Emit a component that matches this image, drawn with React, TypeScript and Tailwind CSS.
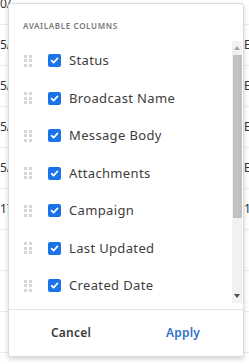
import React from "react";

const bgRows = [
  { l: "0/", r: "" },
  { l: "5/", r: "E" },
  { l: "5/", r: "E" },
  { l: "5/", r: "E" },
  { l: "5/", r: "E" },
  { l: "17", r: "1" },
  { l: "", r: "" },
  { l: "", r: "" },
  { l: "", r: "" },
];

const columns = [
  "Status",
  "Broadcast Name",
  "Message Body",
  "Attachments",
  "Campaign",
  "Last Updated",
  "Created Date",
  "Sent Date",
];

function DragHandle() {
  return (
    <div className="grid grid-cols-2 gap-x-[2px] gap-y-[1.5px] w-[8px] shrink-0">
      {Array.from({ length: 6 }).map((_, i) => (
        <div key={i} className="w-[3px] h-[3px] bg-[#d6d6d6]" />
      ))}
    </div>
  );
}

function Check() {
  return (
    <div className="w-[13px] h-[13px] rounded-[2px] bg-[#1a73e8] flex items-center justify-center shrink-0">
      <svg width="9" height="9" viewBox="0 0 10 10" fill="none">
        <path d="M1.8 5.2 L4 7.3 L8.3 2.6" stroke="#fff" strokeWidth="2" strokeLinecap="round" strokeLinejoin="round" />
      </svg>
    </div>
  );
}

export default function App() {
  return (
    <div
      className="relative w-[249px] h-[364px] bg-white overflow-hidden"
      style={{ fontFamily: '"Noto Sans", "Open Sans", sans-serif' }}
    >
      {/* background table */}
      <div className="flex flex-col mt-[-16px]">
        {bgRows.map((r, i) => (
          <div
            key={i}
            className="h-[41px] shrink-0 border-b border-[#ededed] flex items-center justify-between text-[12px] text-[#333]"
          >
            <span className="ml-0">{r.l}</span>
            <span className="w-[5px] overflow-hidden">{r.r}</span>
          </div>
        ))}
      </div>

      {/* popup */}
      <div className="absolute left-[8px] top-[3px] w-[236px] h-[354px] bg-white border border-[#dcdcdc] rounded-[3px] shadow-[0_2px_5px_rgba(0,0,0,0.18)] flex flex-col">
        <div className="h-[37px] shrink-0 pt-[16px] pl-[14px]">
          <div className="text-[8px] leading-[12px] font-semibold tracking-[0.65px] text-[#777]">
            AVAILABLE COLUMNS
          </div>
        </div>
        <div className="h-[262px] shrink-0 flex">
          <div className="flex-1 overflow-hidden pt-[1px]">
            {columns.map((c) => (
              <div key={c} className="h-[37.5px] flex items-center pl-[15px]">
                <DragHandle />
                <div className="ml-[16px]">
                  <Check />
                </div>
                <span className="ml-[8px] text-[13px] text-[#3d3d3d] tracking-[0.35px]">{c}</span>
              </div>
            ))}
          </div>
          <div className="w-[10px] mr-[1px] bg-[#f1f1f1] flex flex-col items-center">
            <div className="h-[14px] flex items-center justify-center">
              <svg width="6" height="4" viewBox="0 0 6 4">
                <path d="M0 4 L3 0 L6 4 Z" fill="#a3a3a3" />
              </svg>
            </div>
            <div className="w-[9px] h-[163px] bg-[#c1c1c1]" />
            <div className="flex-1" />
            <div className="h-[14px] flex items-center justify-center">
              <svg width="6" height="4" viewBox="0 0 6 4">
                <path d="M0 0 L6 0 L3 4 Z" fill="#505050" />
              </svg>
            </div>
          </div>
        </div>
        <div className="mt-[6px] border-t border-[#e3e3e3] h-[47px] flex items-center">
          <div className="flex-1 flex justify-center pl-[6px]">
            <span className="text-[12px] font-semibold text-[#3a3a3a] tracking-[0.2px]">Cancel</span>
          </div>
          <div className="flex-1 flex justify-center pr-[4px]">
            <span className="text-[12px] font-semibold text-[#2f73c9] tracking-[0.2px]">Apply</span>
          </div>
        </div>
      </div>
    </div>
  );
}
